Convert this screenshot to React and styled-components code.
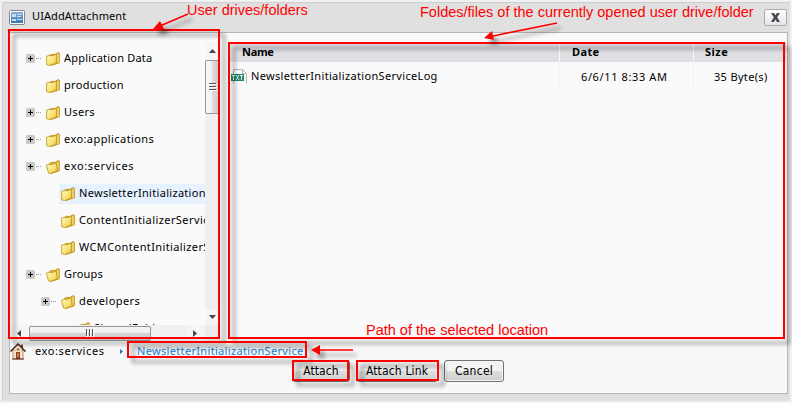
import React from 'react';
import styled, { createGlobalStyle } from 'styled-components';

const Global = createGlobalStyle`
  * { box-sizing: border-box; }
  html, body { margin: 0; padding: 0; background: #f1f1f1; overflow: hidden; }
  body { font-family: "Noto Sans", "Open Sans", sans-serif; font-size: 11px; color: #000; }
`;

const Page = styled.div`
  position: relative;
  width: 792px;
  height: 403px;
  padding: 2px;
  overflow: hidden;
  background: #f1f1f1;
`;

const Window = styled.section`
  display: flex;
  flex-direction: column;
  width: 788px;
  height: 399px;
  padding: 0 2px 7px 6px;
  background: #e0e0e0;
  border-top: 1px solid #cfcfcf;
  border-left: 1px solid #d2d2d2;
`;

const TitleBar = styled.header`
  display: flex;
  align-items: center;
  flex: 0 0 29px;
  height: 29px;
  gap: 7px;
  padding-right: 1px;
`;

const Title = styled.h1`
  flex: 1;
  margin: 0 0 3px;
  font-size: 11px;
  font-weight: 400;
  line-height: 16px;
  letter-spacing: ${(p) => p.$track}px;
`;

const CloseButton = styled.button`
  display: grid;
  place-items: center;
  width: 23px;
  height: 17px;
  margin: 0 0 1px;
  padding: 0;
  border: 1px solid #a9abb0;
  border-radius: 2px;
  background: linear-gradient(#fdfdfe, #e4e6ea);
`;

const Body = styled.div`
  display: flex;
  flex-direction: column;
  flex: 1;
  min-height: 0;
  border: 1px solid #b5b5b5;
  background: #f8f8f8;
`;

const Panes = styled.div`
  display: flex;
  flex: 0 0 308px;
  gap: 9px;
  padding-top: 9px;
  background: #fafafa;
`;

const TreePane = styled.div`
  display: grid;
  grid-template: 283px 16px / 195px 15px;
  flex: 0 0 210px;
`;

const TreeView = styled.div`
  overflow: hidden;
  padding-top: 3px;
`;

const TreeRow = styled.div`
  display: flex;
  align-items: center;
  height: 27px;
  padding-left: ${(p) => p.$indent}px;
`;

const Expander = styled.span`
  display: flex;
  flex: 0 0 18px;
  height: 9px;
  svg { flex: none; }
`;

const NodeLabel = styled.span`
  display: flex;
  flex: 1;
  align-items: center;
  align-self: stretch;
  gap: 4px;
  min-width: 0;
  margin: 4px 0 3px;
  padding-left: 2px;
  overflow: hidden;
  background: ${(p) => (p.$selected ? '#e6f2ff' : 'transparent')};
  svg { flex: none; }
`;

const NodeText = styled.span`
  padding-bottom: 2px;
  white-space: nowrap;
  line-height: 18px;
  letter-spacing: ${(p) => p.$track}px;
`;

const VScroll = styled.div`
  display: flex;
  flex-direction: column;
  align-items: center;
  background: #efefef;
`;

const HScroll = styled.div`
  display: flex;
  align-items: center;
  background: #f0f0f0;
`;

const ScrollArrow = styled.span`
  display: grid;
  place-items: center;
  flex: none;
  width: ${(p) => p.$w}px;
  height: ${(p) => p.$h}px;
  background: #f5f5f5;
`;

const VThumb = styled.div`
  display: grid;
  place-items: center;
  width: 15px;
  height: 54px;
  margin-bottom: auto;
  border: 1px solid #969696;
  border-radius: 2px;
  background: linear-gradient(90deg, #f6f6f6 40%, #dedede 50%, #c8c8cc);
`;

const HThumb = styled.div`
  display: grid;
  place-items: center;
  flex: none;
  width: 122px;
  height: 15px;
  margin-right: auto;
  border: 1px solid #969696;
  border-radius: 2px;
  background: linear-gradient(#f3f3f3 40%, #d8d8d8 50%, #c6c6ca);
`;

const Corner = styled.div`
  background: #ececec;
`;

const FilePane = styled.div`
  flex: 1;
`;

const FileTable = styled.div`
  display: grid;
  grid-template-columns: 331px 134px 1fr;
  width: 557px;
`;

const HeadCell = styled.div`
  height: 20px;
  padding-left: ${(p) => p.$left}px;
  font-weight: 700;
  line-height: 20px;
  letter-spacing: ${(p) => p.$track}px;
  background: #dfe0e4;
  border-right: ${(p) => (p.$last ? 'none' : '1px solid #f7f7f7')};
`;

const Cell = styled.div`
  display: flex;
  gap: 3px;
  height: 30px;
  padding-top: 7px;
  padding-left: ${(p) => p.$left}px;
  line-height: ${(p) => p.$line}px;
  white-space: nowrap;
  letter-spacing: ${(p) => p.$track}px;
  border-right: ${(p) => (p.$last ? 'none' : '1px solid #f3f3f3')};
`;

const Path = styled.nav`
  display: flex;
  align-items: center;
  height: 19px;
  padding-top: 1px;
`;

const Crumb = styled.span`
  width: ${(p) => p.$width}px;
  margin-left: ${(p) => p.$gap}px;
  padding-bottom: 1px;
  white-space: nowrap;
  line-height: 16px;
  letter-spacing: ${(p) => p.$track}px;
  color: ${(p) => (p.$current ? '#1682d4' : '#000')};
`;

const Actions = styled.div`
  display: flex;
  gap: 6px;
  padding-left: 282px;
`;

const ActionButton = styled.button`
  width: ${(p) => p.$width}px;
  height: 22px;
  margin: 0;
  padding: 0;
  font-family: "DejaVu Sans Condensed", "DejaVu Sans", sans-serif;
  font-stretch: condensed;
  font-size: 12px;
  line-height: 20px;
  letter-spacing: ${(p) => p.$track}px;
  white-space: nowrap;
  color: #000;
  border: 1px solid #707070;
  border-radius: 3px;
  background: linear-gradient(#f3f3f3 48%, #dddddd 52%, #cfcfcf);
  box-shadow: inset 0 0 0 1px #f6f6f6;
`;

const Marker = styled.div`
  position: absolute;
  left: ${(p) => p.$x}px;
  top: ${(p) => p.$y}px;
  width: ${(p) => p.$w}px;
  height: ${(p) => p.$h}px;
  border: 2px solid #ff0000;
  filter: drop-shadow(5px 5px 2px rgba(0, 0, 0, 0.45));
  pointer-events: none;
`;

const Note = styled.span`
  position: absolute;
  left: ${(p) => p.$x}px;
  top: ${(p) => p.$y}px;
  font-family: "Liberation Sans", Arial, sans-serif;
  font-size: 14.5px;
  line-height: 16px;
  white-space: nowrap;
  color: #ff0000;
`;

const ArrowLayer = styled.svg`
  position: absolute;
  inset: 0;
  pointer-events: none;
  filter: drop-shadow(4px 5px 2px rgba(0, 0, 0, 0.45));
`;

const WindowIcon = () => (
  <svg width="16" height="15" viewBox="0 0 16 15">
    <defs>
      <linearGradient id="win" x2="0" y2="1">
        <stop stopColor="#84afd8" />
        <stop offset="1" stopColor="#3975b4" />
      </linearGradient>
    </defs>
    <rect x=".5" y=".5" width="15" height="14" rx="1" fill="#fff" stroke="#868686" />
    <path d="M2 2h12v11H2z" fill="url(#win)" />
    <path d="M3 4h4v3H3zM3 9h4v2H3zM8 4h5v1H8zM8 6h4v1H8zM8 9h5v1H8z" fill="#c5dff5" />
  </svg>
);

const CloseIcon = () => (
  <svg width="9" height="9" viewBox="0 0 9 9">
    <path d="M0 0h3l1.5 2.3L6 0h3L6.2 4.3 9 9H6L4.5 6.3 3 9H0l2.8-4.7z" fill="#4a4a4a" />
  </svg>
);

const PlusIcon = () => (
  <svg width="17" height="9" viewBox="0 0 17 9">
    <rect width="9" height="9" rx="1.5" fill="#c9c9c9" />
    <path d="M2 4h5v1H2zM4 2h1v5H4z" fill="#000" />
    <path d="M10 4h1v1h-1zM12 4h1v1h-1zM14 4h1v1h-1z" fill="#999" />
  </svg>
);

const FolderIcon = ({ open }) => (
  <svg width="14" height="14" viewBox="0 0 14 14">
    <defs>
      <linearGradient id="fold" x2="1" y2="1">
        <stop stopColor="#fffac0" />
        <stop offset=".6" stopColor="#f8e274" />
        <stop offset="1" stopColor="#e5b52c" />
      </linearGradient>
    </defs>
    <path d="M3.5 3.2 7 2.2l1.2.6L12.3.6l1 .6v9.6L5 13.4z" fill="#e8bd35" stroke="#b08412" strokeWidth=".8" />
    <path d="M12 1.8v9" stroke="#fff3a0" strokeWidth=".8" />
    {open ? (
      <path d="M.4 5.2 3.8 4l1 .8 5.4-1.6 1.2 8L4 13.5l-1.5-.6z" fill="url(#fold)" stroke="#bd9118" strokeWidth=".8" />
    ) : (
      <path d="M.6 4.2 4 3.2l1 .8 5.4-1.6v9L3.4 13.5.6 12.6z" fill="url(#fold)" stroke="#bd9118" strokeWidth=".8" />
    )}
  </svg>
);

const TextFileIcon = () => (
  <svg width="17" height="15" viewBox="0 0 17 15">
    <path d="M2.5 14.5V.5h9l4 4v10" fill="#fcfcfc" stroke="#b4b4b4" />
    <path d="M11.5.5v4h4" fill="none" stroke="#b4b4b4" />
    <rect y="5" width="13" height="7" fill="#26826b" />
    <path d="M1 6.5h3M2.5 6.5V11M5 6l3 5M8 6l-3 5M9 6.5h3M10.5 6.5V11" stroke="#e9fff8" strokeWidth=".9" fill="none" />
  </svg>
);

const HomeIcon = () => (
  <svg width="16" height="17" viewBox="0 0 16 17">
    <path d="M3 7h10v9H3z" fill="#f5e3c2" stroke="#a9795e" strokeWidth=".8" />
    <path d="M11 1.5h2v4l-2-1.5z" fill="#9d3b28" />
    <path d="M.5 8.5 8 1l7.5 7.5" fill="none" stroke="#3d2320" strokeWidth="1.5" />
    <path d="M8 3 4 7.2h8z" fill="#f0d5b0" />
    <circle cx="8" cy="6.3" r="1" fill="#8e4a31" />
    <path d="M6 9h4v7H6z" fill="#8e4428" />
    <path d="M7 10h2v4H7z" fill="#c77b4b" />
    <path d="M2 15.5h12v1H2z" fill="#572b20" />
  </svg>
);

const Triangle = ({ dir }) => {
  const shapes = {
    up: 'M0 5 3.5 1 7 5z',
    down: 'M0 1h7L3.5 5z',
    left: 'M5 0v7L1 3.5z',
    right: 'M1 0v7l4-3.5z',
  };
  return (
    <svg width="7" height="7" viewBox="0 0 7 7">
      <path d={shapes[dir]} fill="#444" />
    </svg>
  );
};

const Grip = ({ vertical }) => (
  <svg width="8" height="8" viewBox="0 0 8 8">
    <path d={vertical ? 'M0 .5h7M0 3.5h7M0 6.5h7' : 'M.5 0v7M3.5 0v7M6.5 0v7'} stroke="#555" />
    <path d={vertical ? 'M1 1.5h7M1 4.5h7M1 7.5h7' : 'M1.5 1v7M4.5 1v7M7.5 1v7'} stroke="#fff" />
  </svg>
);

const CrumbArrow = () => (
  <svg width="3" height="5" viewBox="0 0 3 5">
    <path d="M0 0v5l3-2.5z" fill="#2e6fb5" />
  </svg>
);

const nodes = [
  { label: 'Application Data', depth: 0, expandable: true, track: 0.2 },
  { label: 'production', depth: 0, track: 0.3 },
  { label: 'Users', depth: 0, expandable: true, track: 0.3 },
  { label: 'exo:applications', depth: 0, expandable: true, track: 0.42 },
  { label: 'exo:services', depth: 0, expandable: true, open: true, track: 0.65 },
  { label: 'NewsletterInitializationService', depth: 1, selected: true, track: 0.3 },
  { label: 'ContentInitializerService', depth: 1, track: 0.42 },
  { label: 'WCMContentInitializerService', depth: 1, track: 0.38 },
  { label: 'Groups', depth: 0, expandable: true, open: true, track: 0.2 },
  { label: 'developers', depth: 1, expandable: true, open: true, track: 0.45 },
  { label: 'SharedFolder', depth: 2, track: 0.3 },
];

const TreeNode = ({ node }) => (
  <TreeRow $indent={16 + node.depth * 15}>
    <Expander>{node.expandable && <PlusIcon />}</Expander>
    <NodeLabel $selected={node.selected}>
      <FolderIcon open={node.open} />
      <NodeText $track={node.track}>{node.label}</NodeText>
    </NodeLabel>
  </TreeRow>
);

export default function App() {
  return (
    <>
      <Global />
      <Page>
        <Window>
          <TitleBar>
            <WindowIcon />
            <Title $track={0.1}>UIAddAttachment</Title>
            <CloseButton aria-label="Close"><CloseIcon /></CloseButton>
          </TitleBar>
          <Body>
            <Panes>
              <TreePane>
                <TreeView>
                  {nodes.map((n) => <TreeNode key={n.label} node={n} />)}
                </TreeView>
                <VScroll>
                  <ScrollArrow $w={15} $h={18}><Triangle dir="up" /></ScrollArrow>
                  <VThumb><Grip vertical /></VThumb>
                  <ScrollArrow $w={15} $h={16}><Triangle dir="down" /></ScrollArrow>
                </VScroll>
                <HScroll>
                  <ScrollArrow $w={19} $h={16}><Triangle dir="left" /></ScrollArrow>
                  <HThumb><Grip /></HThumb>
                  <ScrollArrow $w={19} $h={16}><Triangle dir="right" /></ScrollArrow>
                </HScroll>
                <Corner />
              </TreePane>
              <FilePane>
                <FileTable>
                  <HeadCell $left={13} $track={-0.3}>Name</HeadCell>
                  <HeadCell $left={12} $track={0.4}>Date</HeadCell>
                  <HeadCell $left={11} $last $track={0.5}>Size</HeadCell>
                  <Cell $left={2} $line={13} $track={0.33}>
                    <TextFileIcon />
                    NewsletterInitializationServiceLog
                  </Cell>
                  <Cell $left={21} $line={16} $track={0.62}>6/6/11 8:33 AM</Cell>
                  <Cell $left={20} $line={16} $last $track={0.33}>35 Byte(s)</Cell>
                </FileTable>
              </FilePane>
            </Panes>
            <Path>
              <HomeIcon />
              <Crumb $gap={9} $width={85} $track={0.6}>exo:services</Crumb>
              <CrumbArrow />
              <Crumb $current $gap={14} $width={170} $track={0.33}>NewsletterInitializationService</Crumb>
            </Path>
            <Actions>
              <ActionButton $width={58} $track={0.1}>Attach</ActionButton>
              <ActionButton $width={82} $track={0.15}>Attach Link</ActionButton>
              <ActionButton $width={60} $track={0.25}>Cancel</ActionButton>
            </Actions>
          </Body>
        </Window>

        <Marker $x={8} $y={29} $w={212} $h={310} />
        <Marker $x={228} $y={42} $w={557} $h={297} />
        <Marker $x={127} $y={341} $w={180} $h={17} />
        <Marker $x={292} $y={360} $w={57} $h={21} />
        <Marker $x={356} $y={360} $w={83} $h={21} />
        <ArrowLayer width="792" height="403" viewBox="0 0 792 403">
          <path d="M188 14 160 26M557 23 493 36M353 350H319" stroke="#ff0000" strokeWidth="1.6" fill="none" />
          <path d="m153 29 7-8 4 8zM484 38l8-7 2 9zM311 350l9-5v10z" fill="#ff0000" />
        </ArrowLayer>
        <Note $x={187} $y={2}>User drives/folders</Note>
        <Note $x={420} $y={4}>Foldes/files of the currently opened user drive/folder</Note>
        <Note $x={366} $y={322}>Path of the selected location</Note>
      </Page>
    </>
  );
}
